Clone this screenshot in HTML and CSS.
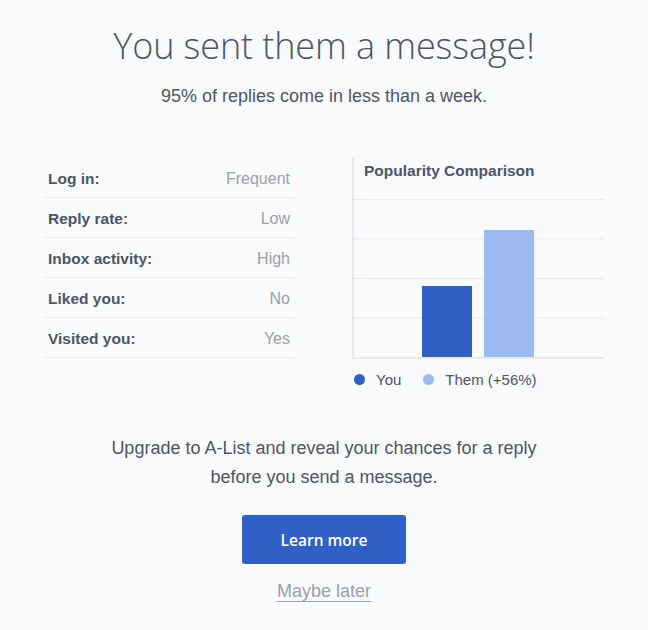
FILE: index.html
```html
<!DOCTYPE html>
<html lang="en">
  <head>
    <meta charset="UTF-8" />
    <meta name="viewport" content="width=device-width, initial-scale=1.0" />
    <title>Message sent</title>
    <link rel="stylesheet" href="styles.css">
  </head>
  <body>
    <div class="page">
      <h1 class="title">You sent them a message!</h1>
      <p class="subtitle">95% of replies come in less than a week.</p>

      <div class="stats">
        <ul class="facts">
          <li><span class="label">Log in:</span><span class="value">Frequent</span></li>
          <li><span class="label">Reply rate:</span><span class="value">Low</span></li>
          <li><span class="label">Inbox activity:</span><span class="value">High</span></li>
          <li><span class="label">Liked you:</span><span class="value">No</span></li>
          <li><span class="label">Visited you:</span><span class="value">Yes</span></li>
        </ul>

        <div class="chart">
          <div class="plot">
            <div class="chart-title">Popularity Comparison</div>
            <div class="grid">
              <div class="bars">
                <div class="bar you" style="height: 71px"></div>
                <div class="bar them" style="height: 127px"></div>
              </div>
            </div>
          </div>
          <div class="legend">
            <span class="key"><i class="dot you"></i>You</span>
            <span class="key"><i class="dot them"></i>Them (+56%)</span>
          </div>
        </div>
      </div>

      <p class="upgrade">Upgrade to A-List and reveal your chances for a reply<br>before you send a message.</p>
      <button class="cta">Learn more</button>
      <a class="later" href="#">Maybe later</a>
    </div>
  </body>
</html>
```

FILE: styles.css
```css
* {
  margin: 0;
  padding: 0;
  box-sizing: border-box;
}
body {
  background-color: #f9fafc;
  font-family: "Liberation Sans", Arial, sans-serif;
  color: #4d5566;
}
.page {
  width: 648px;
  height: 630px;
  display: flex;
  flex-direction: column;
  align-items: center;
  padding-top: 22px;
}
.title {
  font-family: "Open Sans", sans-serif;
  font-weight: 300;
  font-size: 36px;
  line-height: 48px;
  color: #4b5366;
  letter-spacing: -0.1px;
}
.subtitle {
  margin-top: 15px;
  font-size: 18px;
  line-height: 22px;
}
.stats {
  margin-top: 51px;
  width: 560px;
  display: flex;
  justify-content: space-between;
}
.facts {
  list-style: none;
  width: 251px;
}
.facts li {
  display: flex;
  justify-content: space-between;
  height: 40px;
  padding: 3px 5px 0 4px;
  align-items: center;
  border-bottom: 1px solid #e8eaf0;
  font-size: 15.5px;
}
.label {
  font-weight: 700;
  color: #4d5566;
}
.value {
  font-size: 16px;
  color: #9a9fab;
}
.chart {
  width: 252px;
  display: flex;
  flex-direction: column;
}
.plot {
  border-left: 2px solid #e8eaf0;
  border-bottom: 2px solid #e8eaf0;
}
.chart-title {
  font-size: 15.5px;
  font-weight: 700;
  color: #4d5566;
  padding: 4px 0 0 10px;
  height: 41px;
}
.grid {
  height: 158px;
  background-image: linear-gradient(#e8eaf0 1px, transparent 1px);
  background-size: 100% 39.5px;
  display: flex;
  align-items: flex-end;
}
.bars {
  display: flex;
  align-items: flex-end;
  gap: 12px;
  margin-left: 68px;
}
.bar {
  width: 50px;
}
.bar.you {
  background-color: #3060c6;
}
.bar.them {
  background-color: #9dbaf0;
}
.legend {
  display: flex;
  gap: 22px;
  padding: 12px 0 0 2px;
  font-size: 15px;
  color: #4d5566;
}
.key {
  display: flex;
  align-items: center;
  gap: 11px;
}
.dot {
  width: 11px;
  height: 11px;
  border-radius: 50%;
}
.dot.you {
  background-color: #3060c6;
}
.dot.them {
  background-color: #9dbaf0;
}
.upgrade {
  margin-top: 46px;
  text-align: center;
  font-size: 18px;
  line-height: 29px;
}
.cta {
  margin-top: 23px;
  width: 164px;
  height: 49px;
  border: none;
  border-radius: 3px;
  background-color: #3060c6;
  color: #fff;
  font-family: "Open Sans", sans-serif;
  font-weight: 600;
  font-size: 15.5px;
  cursor: pointer;
}
.later {
  margin-top: 17px;
  font-size: 18px;
  color: #9aa0ad;
  text-decoration: none;
  border-bottom: 1px solid #9aa0ad;
  line-height: 20px;
}
```
